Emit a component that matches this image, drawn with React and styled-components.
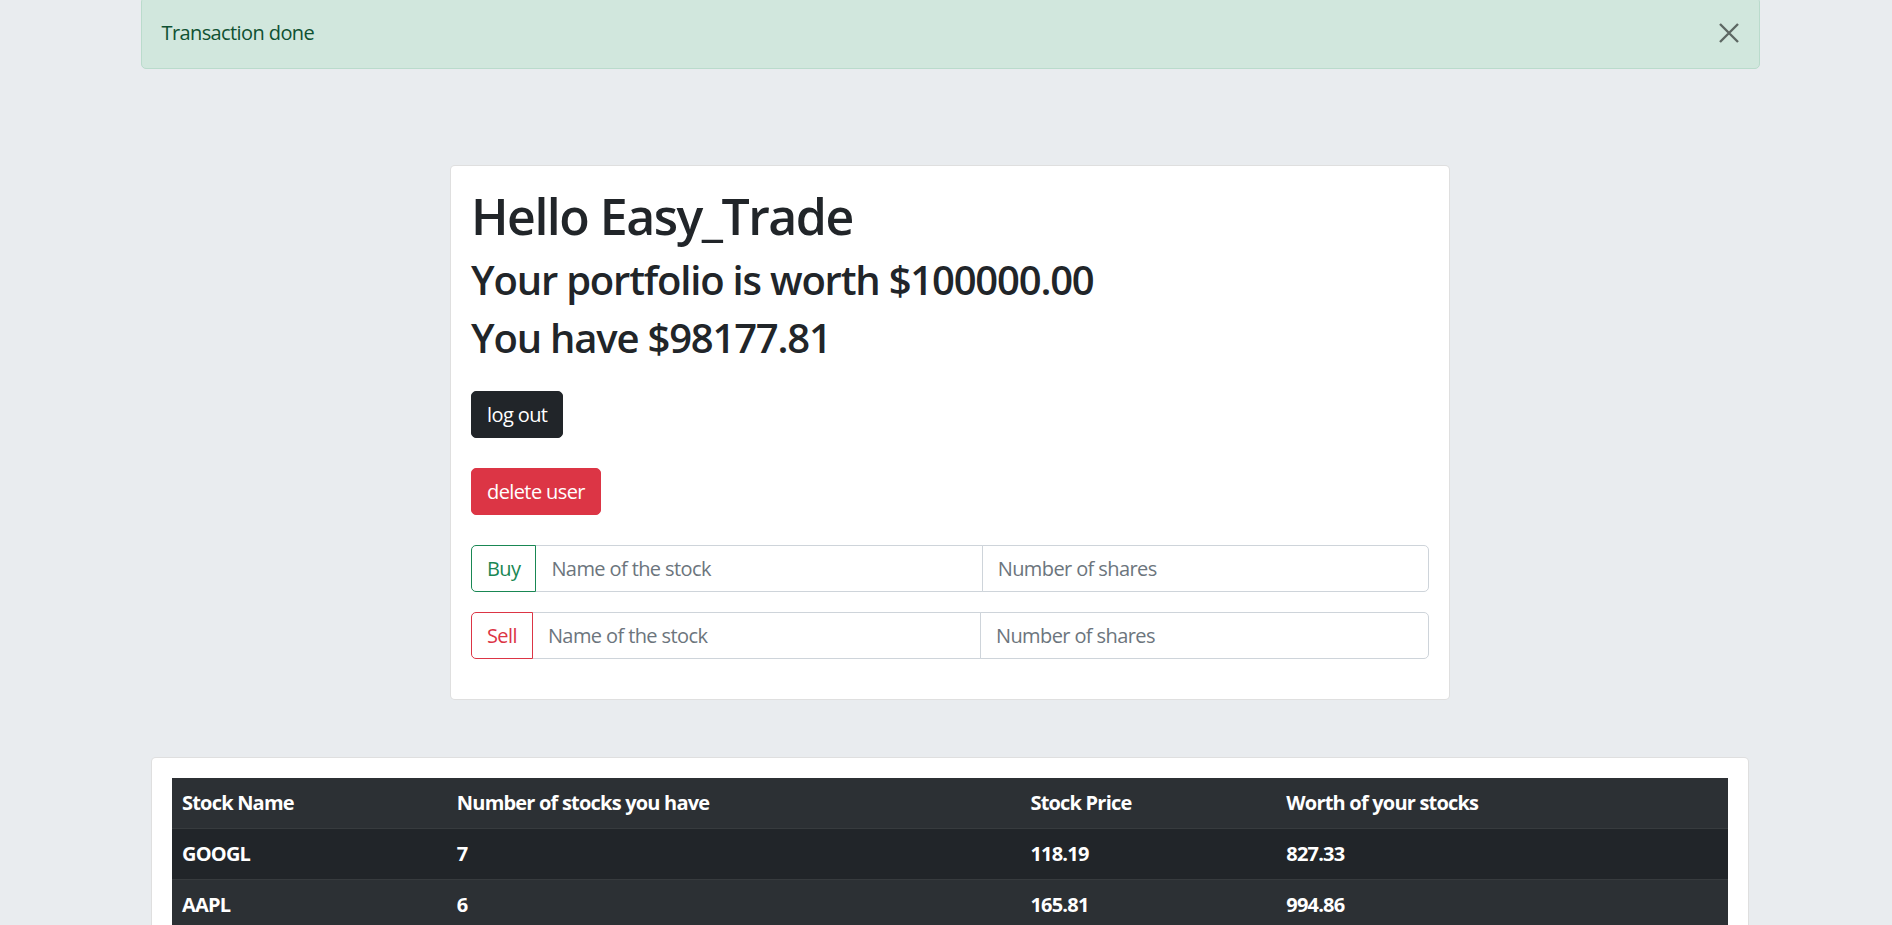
import React from "react";
import styled, { createGlobalStyle } from "styled-components";

const GlobalStyle = createGlobalStyle`
    body {
        margin: 0 0 0 8px;
        background: #e9ecef;
        font-family: "Open Sans", "Noto Sans", sans-serif;
        color: #212529;
        font-size: 20px;
        line-height: 1.5;
        letter-spacing: -0.03em;
    }
    * {
        box-sizing: border-box;
    }
`

const Page = styled.div`
    display: flex;
    flex-direction: column;
    align-items: center;
`

const Alert = styled.div`
    width: 1619px;
    margin-top: -3px;
    padding: 20px;
    display: flex;
    align-items: center;
    justify-content: space-between;
    background: #d1e7dd;
    border: 1px solid #badbcc;
    border-radius: 5px;
    color: #0f5132;
    font-size: 20px;
`

const CloseButton = styled.button`
    width: 20px;
    height: 20px;
    padding: 0;
    border: none;
    background: transparent;
    display: flex;
    cursor: pointer;
    opacity: 0.55;
`

const Card = styled.div`
    width: ${props => props.width}px;
    margin-top: ${props => props.top}px;
    padding: 20px;
    background: #fff;
    border: 1px solid rgba(0, 0, 0, 0.125);
    border-radius: 5px;
`

const Title = styled.h1`
    margin: 0 0 10px;
    font-size: ${props => props.size}px;
    font-weight: 600;
    line-height: 1.2;
    letter-spacing: -0.03em;
`

const Row = styled.div`
    margin-top: ${props => props.top}px;
    display: flex;
`

const Button = styled.button`
    padding: 7.5px 15px;
    font-family: inherit;
    font-size: 20px;
    line-height: 1.5;
    letter-spacing: inherit;
    color: #fff;
    background: ${props => props.bg};
    border: 1px solid ${props => props.bg};
    border-radius: 5px;
    cursor: pointer;
`

const InputGroup = styled.div`
    margin-top: ${props => props.top}px;
    display: flex;
    width: 100%;
`

const GroupButton = styled.button`
    padding: 7.5px 15px;
    font-family: inherit;
    font-size: 20px;
    line-height: 1.5;
    letter-spacing: inherit;
    color: ${props => props.color};
    background: #fff;
    border: 1px solid ${props => props.color};
    border-radius: 5px 0 0 5px;
    position: relative;
    z-index: 1;
`

const Input = styled.input`
    flex: 1;
    min-width: 0;
    margin-left: -1px;
    padding: 7.5px 15px;
    font-family: inherit;
    font-size: 20px;
    line-height: 1.5;
    letter-spacing: inherit;
    color: #212529;
    border: 1px solid #ced4da;
    border-radius: ${props => (props.last ? "0 5px 5px 0" : "0")};
    outline: none;

    &::placeholder {
        color: #6c757d;
    }
`

const Table = styled.table`
    width: 100%;
    border-collapse: collapse;
    color: #fff;
`

const Tr = styled.tr`
    background: ${props => (props.striped ? "#2c3034" : "#212529")};
`

const Cell = styled.th`
    padding: 10px;
    text-align: left;
    font-weight: 700;
    font-size: 20px;
    line-height: 1.5;
    letter-spacing: -0.04em;
    border-bottom: 1px solid #373b3e;
`

const STOCKS = [
    { name: "GOOGL", count: 7, price: "118.19", worth: "827.33" },
    { name: "AAPL", count: 6, price: "165.81", worth: "994.86" },
]

const CloseIcon = () => (
    <svg width="20" height="20" viewBox="0 0 20 20">
        <path d="M1 1 L19 19 M19 1 L1 19" stroke="#000" strokeWidth="2.4" fill="none" />
    </svg>
)

const TradeRow = ({ label, color, top }) => (
    <InputGroup top={top}>
        <GroupButton color={color}>{label}</GroupButton>
        <Input placeholder="Name of the stock" />
        <Input placeholder="Number of shares" last />
    </InputGroup>
)

const App = () => {
    return (
        <>
            <GlobalStyle />
            <Page>
                <Alert>
                    <span>Transaction done</span>
                    <CloseButton aria-label="Close">
                        <CloseIcon />
                    </CloseButton>
                </Alert>

                <Card width={1000} top={96}>
                    <Title size={50}>Hello Easy_Trade</Title>
                    <Title size={40}>Your portfolio is worth $100000.00</Title>
                    <Title size={40}>You have $98177.81</Title>
                    <Row top={29}>
                        <Button bg="#212529">log out</Button>
                    </Row>
                    <Row top={30}>
                        <Button bg="#dc3545">delete user</Button>
                    </Row>
                    <TradeRow label="Buy" color="#198754" top={30} />
                    <TradeRow label="Sell" color="#dc3545" top={20} />
                    <div style={{ height: 20 }} />
                </Card>

                <Card width={1598} top={57}>
                    <Table>
                        <colgroup>
                            <col style={{ width: 275 }} />
                            <col style={{ width: 574 }} />
                            <col style={{ width: 256 }} />
                            <col style={{ width: 452 }} />
                        </colgroup>
                        <tbody>
                            <Tr striped>
                                <Cell>Stock Name</Cell>
                                <Cell>Number of stocks you have</Cell>
                                <Cell>Stock Price</Cell>
                                <Cell>Worth of your stocks</Cell>
                            </Tr>
                            {STOCKS.map((s, i) => (
                                <Tr key={s.name} striped={i % 2 === 1}>
                                    <Cell>{s.name}</Cell>
                                    <Cell>{s.count}</Cell>
                                    <Cell>{s.price}</Cell>
                                    <Cell>{s.worth}</Cell>
                                </Tr>
                            ))}
                        </tbody>
                    </Table>
                </Card>
            </Page>
        </>
    )
}

export default App
